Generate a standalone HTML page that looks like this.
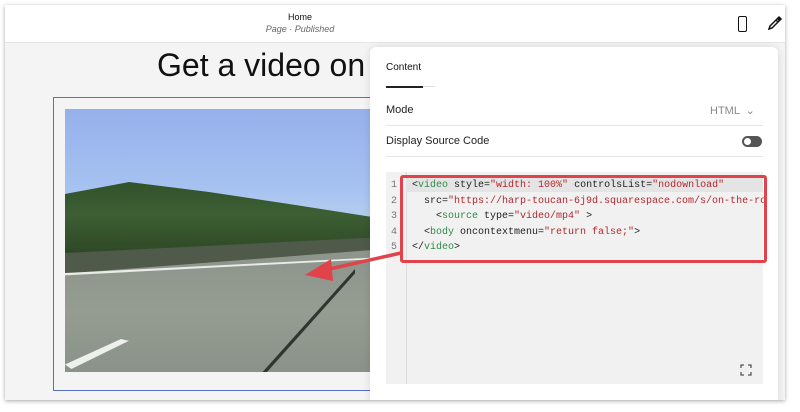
<!DOCTYPE html><html><head><style>
body{margin:0;width:800px;height:412px;background:#fff;position:relative;overflow:hidden;font-family:"Liberation Sans",sans-serif}
.frame{position:absolute;left:5px;top:5px;width:780px;height:395px;background:#f4f4f4;box-shadow:0 1px 4px rgba(0,0,0,.35);overflow:hidden}
.hdr{position:absolute;left:0;top:0;width:780px;height:37px;background:#fff;border-bottom:1px solid #e6e6e6}
.abs{position:absolute}
.code{font-family:"Liberation Mono",monospace;font-size:10px;white-space:pre;color:#222}
.t{color:#2f8a4a}.s{color:#b3282e}
</style></head><body>
<div class="frame">
<div class="hdr">
<div class="abs" style="left:0;width:590px;top:7px;text-align:center;font-size:9px;color:#111">Home</div>
<div class="abs" style="left:0;width:590px;top:19px;text-align:center;font-size:9px;font-style:italic;color:#666">Page · Published</div>
<div class="abs" style="left:733px;top:11px;width:7px;height:14px;border:1.5px solid #111;border-radius:2px"></div>
<svg class="abs" style="left:762px;top:10px" width="16" height="16" viewBox="0 0 16 16" fill="none" stroke="#111" stroke-width="1.5"><path d="M2 14l3-1 6-6-2-2-6 6zM9 5l3-3 2 2-3 3M10 3l2 2M11 2l2 2"/></svg>
</div>
<div class="abs" style="left:152px;top:42px;font-size:32px;color:#111">Get a video on</div>
<div class="abs" style="left:48px;top:92px;width:330px;height:292px;border:1px solid #5a6fc8"></div>
<div class="abs" style="left:60px;top:104px;width:320px;height:263px;overflow:hidden;background:linear-gradient(#96b0ec 0%,#a6c2f0 30%,#b9d0ee 45%,#8a9188 46%)">
<div class="abs" style="left:0;top:55px;width:320px;height:100px;background:linear-gradient(#2b4a26,#3d5f33 50%,#2a4222);clip-path:polygon(0 30%,20% 18%,45% 28%,70% 40%,100% 55%,100% 75%,0 95%)"></div>
<div class="abs" style="left:0;top:128px;width:320px;height:40px;background:#4f5a4a;clip-path:polygon(0 40%,100% 0,100% 30%,0 100%)"></div>
<div class="abs" style="left:0;top:140px;width:320px;height:123px;background:linear-gradient(#8d948b,#959c92 50%,#8b9289);clip-path:polygon(0 20%,100% 0,100% 100%,0 100%)"></div>
<div class="abs" style="left:0;top:148px;width:320px;height:20px;background:#e8ebe6;clip-path:polygon(0 80%,100% 0,100% 8%,0 92%)"></div>
<div class="abs" style="left:0;top:230px;width:80px;height:30px;background:#eef0ec;clip-path:polygon(0 85%,70% 0,80% 6%,8% 100%)"></div>
<div class="abs" style="left:180px;top:160px;width:110px;height:103px;background:#2f3530;clip-path:polygon(100% 0,102% 2%,20% 100%,16% 100%)"></div>
</div>
<div class="abs" style="left:365px;top:42px;width:408px;height:360px;background:#fff;border-radius:6px;box-shadow:0 0 8px rgba(0,0,0,.12)">
<div class="abs" style="left:16px;top:15px;font-size:10px;color:#111">Content</div>
<div class="abs" style="left:16px;top:39px;width:37px;height:2px;background:#222"></div>
<div class="abs" style="left:53px;top:39px;width:12px;height:1px;background:#ddd"></div>
<div class="abs" style="left:16px;top:57px;font-size:11px;color:#222">Mode</div>
<div class="abs" style="left:340px;top:57px;font-size:11px;color:#888">HTML &nbsp;⌄</div>
<div class="abs" style="left:16px;top:78px;width:377px;height:1px;background:#e6e6e6"></div>
<div class="abs" style="left:16px;top:88px;font-size:11px;color:#222">Display Source Code</div>
<div class="abs" style="left:372px;top:89px;width:20px;height:11px;border-radius:6px;background:#555"><div style="margin:2px;width:7px;height:7px;border-radius:50%;background:#fff"></div></div>
<div class="abs" style="left:16px;top:109px;width:377px;height:1px;background:#e6e6e6"></div>
<div class="abs" style="left:16px;top:125px;width:377px;height:212px;background:#f1f1f1">
<div class="abs" style="left:20px;top:0;width:1px;height:212px;background:#ddd"></div>
<div class="abs" style="left:20px;top:6px;width:357px;height:14px;background:#e4e4e4"></div>
<div class="abs code" style="left:5px;top:6px;line-height:15.5px;color:#777">1
2
3
4
5</div>
<div class="abs code" style="left:26px;top:6px;line-height:15.5px"><span>&lt;</span><span class="t">video</span> style=<span class="s">"width: 100%"</span> controlsList=<span class="s">"nodownload"</span>
  src=<span class="s">"https://harp-toucan-6j9d.squarespace.com/s/on-the-ro</span>
    &lt;<span class="t">source</span> type=<span class="s">"video/mp4"</span> &gt;
  &lt;<span class="t">body</span> oncontextmenu=<span class="s">"return false;"</span>&gt;
&lt;/<span class="t">video</span>&gt;</div>
<svg class="abs" style="left:354px;top:192px" width="12" height="12" viewBox="0 0 12 12" fill="none" stroke="#555" stroke-width="1.3"><path d="M1 4V1h3M8 1h3v3M11 8v3H8M4 11H1V8"/></svg>
</div>
</div>
<div class="abs" style="left:395px;top:170px;width:361px;height:82px;border:3.5px solid #e0434a;border-radius:3px"></div>
<svg class="abs" style="left:0;top:0" width="780" height="395"><line x1="396" y1="248" x2="320" y2="265" stroke="#e0434a" stroke-width="3.5"/><polygon points="300,270 326,254 328,276" fill="#e0434a"/></svg>
</div>
</body></html>
